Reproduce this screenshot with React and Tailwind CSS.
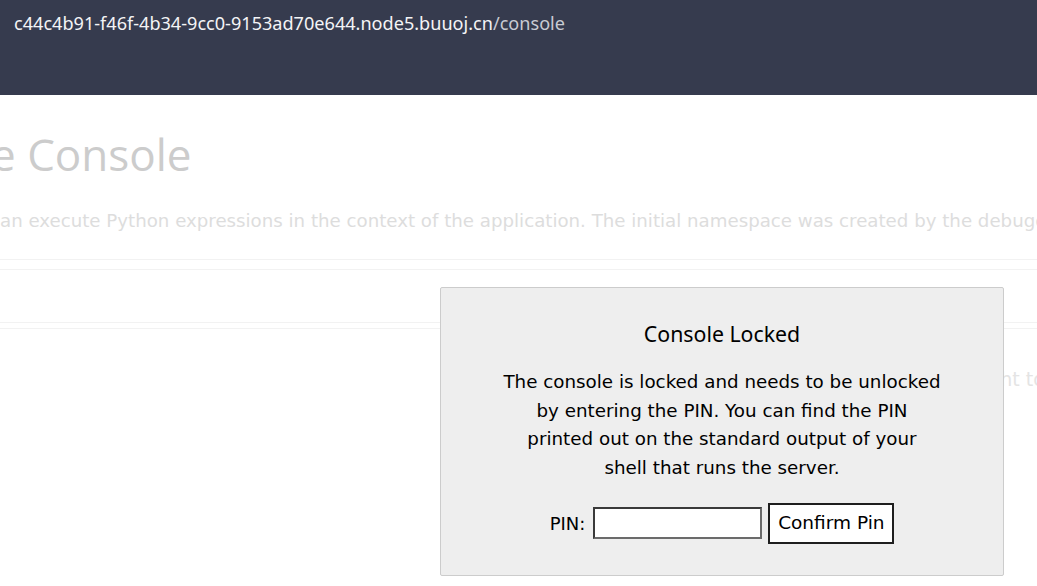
export default function App() {
  return (
    <div className="w-[1037px] h-[586px] overflow-hidden bg-white relative">
      {/* browser url bar */}
      <div className="h-[95px] bg-[#363b4e] px-[14px] pt-[10px]">
        <div className="text-[18.1px] leading-[26px] text-[#f4f4f6] whitespace-nowrap" style={{ fontFamily: '"Noto Sans", sans-serif' }}>
          c44c4b91-f46f-4b34-9cc0-9153ad70e644.node5.buuoj.cn<span className="text-[#c9cbd3]">/console</span>
        </div>
      </div>

      {/* page behind the overlay, scrolled to the right */}
      <div className="overflow-hidden">
        <div className="w-[1200px] ml-[-9px]">
          <h1 className="pt-[28px] h-[96px] text-[44px] leading-[62px] text-[#cccccc] whitespace-nowrap" style={{ fontFamily: '"Open Sans", sans-serif' }}>
            e Console
          </h1>
          <p className="h-[68px] pt-[17px] pl-[9px] text-[18.2px] leading-[26px] text-[#dddddd] whitespace-nowrap" style={{ fontFamily: '"DejaVu Sans", sans-serif' }}>
            an execute Python expressions in the context of the application. The initial namespace was created by the debugger automatically.
          </p>
          <div className="border-t border-[#f2f2f2] h-[10px]" />
          <div className="border-t border-[#f2f2f2] h-[53px]" />
          <div className="border-t border-[#f2f2f2] h-[6px]" />
          <div className="border-t border-[#f2f2f2] h-[38px]" />
          <p className="text-[19px] leading-[26px] text-[#e4e4e4] whitespace-nowrap pl-[984px]" style={{ fontFamily: '"DejaVu Sans", sans-serif' }}>
            right to
          </p>
        </div>
      </div>

      {/* pin prompt overlay */}
      <div className="absolute left-[440px] top-[287px] w-[564px] h-[289px] bg-[#eeeeee] border border-[#cccccc] rounded-[2px] flex flex-col items-center text-black" style={{ fontFamily: '"DejaVu Sans", sans-serif' }}>
        <div className="mt-[33px] text-[21.3px] leading-[26px]" style={{ fontFamily: '"Noto Sans", sans-serif' }}>Console Locked</div>
        <p className="mt-[21px] text-center text-[18.3px] leading-[28.7px] whitespace-nowrap">
          The console is locked and needs to be unlocked<br />
          by entering the PIN. You can find the PIN<br />
          printed out on the standard output of your<br />
          shell that runs the server.
        </p>
        <div className="mt-[20px] flex items-center text-[18px]">
          <span className="mr-[8px]">PIN:</span>
          <input type="text" className="w-[169px] h-[32px] bg-white border-2 border-[#6b6b6b] border-t-[#3a3a3a] border-l-[#3a3a3a] outline-none" />
          <button className="ml-[6px] h-[41px] w-[126px] bg-white border-2 border-[#1e1e1e] text-[18.5px] leading-[24px]">Confirm Pin</button>
        </div>
      </div>
    </div>
  );
}
